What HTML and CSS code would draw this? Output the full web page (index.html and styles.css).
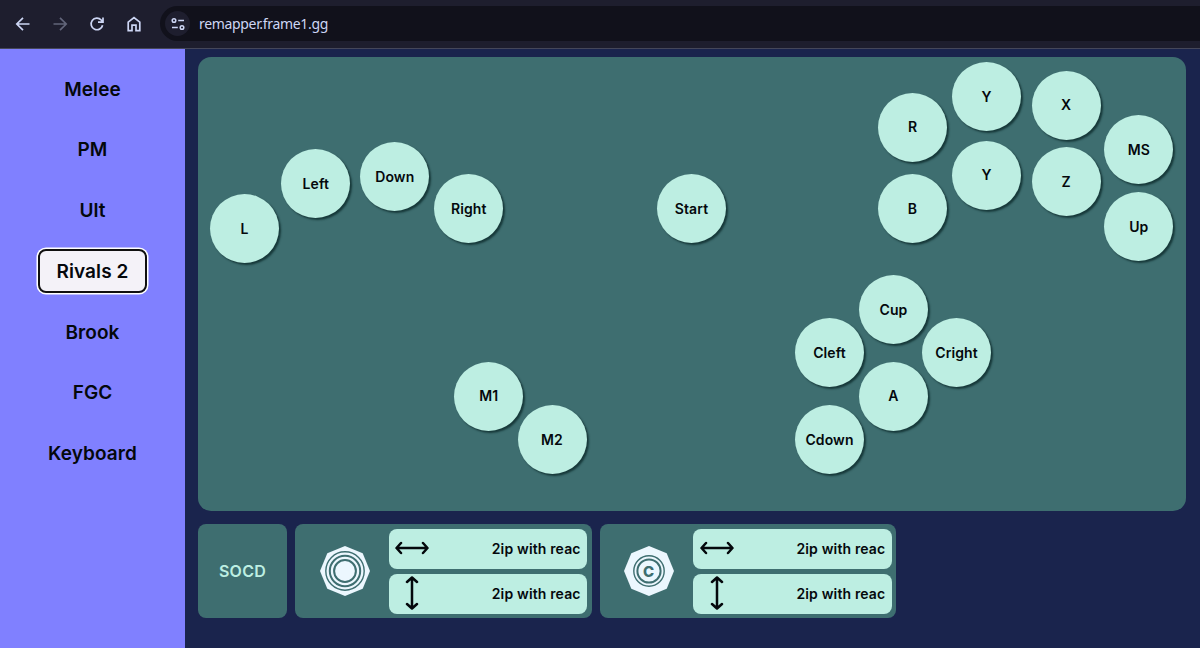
FILE: index.html
```
<!DOCTYPE html>
<html lang="en">
<head>
    <meta charset="UTF-8">
    <meta name="viewport" content="width=device-width, initial-scale=1.0">
    <title>Frame1 Remapper</title>
    <link rel="stylesheet" href="styles.css">
</head>
<body>
    <header class="browser-bar">
        <div class="browser-nav">
            <svg viewBox="0 0 16 16"><path d="M14.5 8H2.2M8 1.8L1.8 8L8 14.2"/></svg>
            <svg class="disabled" viewBox="0 0 16 16"><path d="M1.5 8h12.3M8 1.8L14.2 8L8 14.2"/></svg>
            <svg viewBox="0 0 16 16"><path d="M13.6 9.2A5.8 5.8 0 1 1 12.2 4L13.8 5.8M14 1.4V6.2H9"/></svg>
            <svg viewBox="0 0 16 16"><path d="M2.2 14.6V6.2L8 1.6L13.8 6.2V14.6H10V9.2H6V14.6Z"/></svg>
        </div>
        <div class="address">
            <span class="site-info">
                <svg viewBox="0 0 14 14"><circle cx="3" cy="3.5" r="1.8"/><circle cx="11" cy="10.5" r="1.8"/><path d="M7.2 3.5H13M1 10.5H6.8"/></svg>
            </span>
            <span class="url">remapper.frame1.gg</span>
        </div>
    </header>
    <div class="app">
        <nav class="sidebar">
            <button class="profile">Melee</button>
            <button class="profile">PM</button>
            <button class="profile">Ult</button>
            <button class="profile active">Rivals 2</button>
            <button class="profile">Brook</button>
            <button class="profile">FGC</button>
            <button class="profile">Keyboard</button>
        </nav>
        <main>
            <div class="board">
                <button class="key key-l">L</button>
                <button class="key key-left">Left</button>
                <button class="key key-down">Down</button>
                <button class="key key-right">Right</button>
                <button class="key key-start">Start</button>
                <button class="key key-r">R</button>
                <button class="key key-y1">Y</button>
                <button class="key key-x">X</button>
                <button class="key key-ms">MS</button>
                <button class="key key-b">B</button>
                <button class="key key-y2">Y</button>
                <button class="key key-z">Z</button>
                <button class="key key-up">Up</button>
                <button class="key key-cup">Cup</button>
                <button class="key key-cleft">Cleft</button>
                <button class="key key-cright">Cright</button>
                <button class="key key-a">A</button>
                <button class="key key-cdown">Cdown</button>
                <button class="key key-m1">M1</button>
                <button class="key key-m2">M2</button>
            </div>
            <div class="socd">
                <div class="panel socd-title">SOCD</div>
                <div class="panel stick">
                    <svg class="stick-icon" viewBox="-25 -25 50 50">
                        <polygon points="0,-25 17.7,-17.7 25,0 17.7,17.7 0,25 -17.7,17.7 -25,0 -17.7,-17.7"/>
                        <circle class="thin" r="19.2"/>
                        <circle r="15.2"/>
                        <circle r="10.9"/>
                    </svg>
                    <div class="modes">
                        <button class="mode">
                            <svg viewBox="-17 -17 34 34"><path d="M-15 0H15M-11-5L-15.5 0L-11 5M11-5L15.5 0L11 5"/></svg>
                            <span>2ip with reac</span>
                        </button>
                        <button class="mode">
                            <svg viewBox="-17 -17 34 34"><path d="M0-15V15M-5-11L0-15.5L5-11M-5 11L0 15.5L5 11"/></svg>
                            <span>2ip with reac</span>
                        </button>
                    </div>
                </div>
                <div class="panel stick">
                    <svg class="stick-icon" viewBox="-25 -25 50 50">
                        <polygon points="0,-25 17.7,-17.7 25,0 17.7,17.7 0,25 -17.7,17.7 -25,0 -17.7,-17.7"/>
                        <circle class="thin" r="15.2"/>
                        <circle r="11.6"/>
                        <text x="-0.5" y="5.5">C</text>
                    </svg>
                    <div class="modes">
                        <button class="mode">
                            <svg viewBox="-17 -17 34 34"><path d="M-15 0H15M-11-5L-15.5 0L-11 5M11-5L15.5 0L11 5"/></svg>
                            <span>2ip with reac</span>
                        </button>
                        <button class="mode">
                            <svg viewBox="-17 -17 34 34"><path d="M0-15V15M-5-11L0-15.5L5-11M-5 11L0 15.5L5 11"/></svg>
                            <span>2ip with reac</span>
                        </button>
                    </div>
                </div>
            </div>
        </main>
    </div>
</body>
</html>
```

FILE: styles.css
```
* {
    box-sizing: border-box;
}

body {
    font-family: Inter, 'Open Sans', sans-serif;
    margin: 0;
    height: 100vh;
    display: flex;
    flex-direction: column;
    overflow: hidden;
    background-color: #1a244d;
    color: #04080c;
}

button {
    font-family: inherit;
    color: inherit;
    border: none;
    padding: 0;
    cursor: pointer;
}

.browser-bar {
    height: 48.5px;
    flex-shrink: 0;
    display: flex;
    align-items: center;
    padding-left: 15px;
    background-color: #1e1e2e;
    border-bottom: 1px solid #45475a;
}

.browser-nav {
    display: flex;
    gap: 21px;
}

.browser-nav svg {
    width: 16px;
    height: 16px;
}

.browser-bar svg {
    fill: none;
    stroke: #cdd6f4;
    stroke-width: 1.7;
}

.browser-bar svg.disabled {
    stroke: #62657a;
}

.address {
    flex: 1;
    height: 35px;
    margin-left: 18px;
    padding-left: 5px;
    display: flex;
    align-items: center;
    gap: 9px;
    background-color: #11111b;
    border-radius: 18px 0 0 18px;
}

.site-info {
    width: 25px;
    height: 25px;
    border-radius: 50%;
    background-color: #1e1e2e;
    display: flex;
    align-items: center;
    justify-content: center;
}

.site-info svg {
    width: 14px;
    height: 14px;
    stroke-width: 1.5;
}

.url {
    font-family: 'Noto Sans', sans-serif;
    font-size: 14px;
    letter-spacing: -0.33px;
    color: #cdd6f4;
}

.app {
    flex: 1;
    display: flex;
}

.sidebar {
    width: 185px;
    background-color: #8080ff;
    display: flex;
    flex-direction: column;
    align-items: center;
    gap: 16.8px;
    padding-top: 18.5px;
}

.profile {
    width: 109px;
    height: 44px;
    font-size: 19px;
    font-weight: 600;
    letter-spacing: 0.1px;
    white-space: nowrap;
    background: none;
    border-radius: 8px;
}

.profile.active {
    background-color: #f4f2f8;
    border: 2px solid #101010;
    box-shadow: 0 0 0 1.5px #fff;
}

main {
    flex: 1;
    padding: 8.5px 14px 0 13px;
}

.board {
    position: relative;
    height: 454px;
    background-color: #3e6e70;
    border-radius: 13px;
}

/* Keys sit where they are on the physical controller */
.key {
    position: absolute;
    width: 69px;
    height: 69px;
    padding-bottom: 1px;
    border-radius: 50%;
    background-color: #bdeee2;
    box-shadow: 2px 2px 2px #17393a;
    font-size: 14px;
    font-weight: 600;
    letter-spacing: 0.1px;
}

.key-l { left: 12px; top: 137px; }
.key-left { left: 83.3px; top: 92px; }
.key-down { left: 162.3px; top: 85px; }
.key-right { left: 236.3px; top: 117px; }
.key-start { left: 459px; top: 117px; }
.key-r { left: 680px; top: 35.5px; }
.key-y1 { left: 754px; top: 5.3px; }
.key-x { left: 833.7px; top: 13.5px; }
.key-ms { left: 906.3px; top: 58px; }
.key-b { left: 680px; top: 117px; }
.key-y2 { left: 754px; top: 83.7px; }
.key-z { left: 833.7px; top: 90.3px; }
.key-up { left: 906.3px; top: 135px; }
.key-cup { left: 661px; top: 218px; }
.key-cleft { left: 597px; top: 261px; }
.key-cright { left: 724px; top: 261px; }
.key-a { left: 661px; top: 304.7px; }
.key-cdown { left: 597px; top: 348.3px; }
.key-m1 { left: 256.3px; top: 304.7px; }
.key-m2 { left: 319.5px; top: 348.3px; }

.socd {
    display: flex;
    gap: 8.2px;
    margin-top: 13px;
}

.panel {
    height: 94px;
    background-color: #3e6e70;
    border-radius: 8px;
}

.socd-title {
    width: 89px;
    display: flex;
    align-items: center;
    justify-content: center;
    font-size: 16px;
    font-weight: 600;
    letter-spacing: 0.3px;
    color: #bdeee2;
}

.stick {
    width: 296.5px;
    display: flex;
    align-items: center;
    justify-content: space-between;
    padding: 0 4.5px 0 24.5px;
}

.stick-icon {
    width: 50px;
    height: 50px;
    fill: #ecf7fe;
}

.stick-icon circle {
    fill: none;
    stroke: #3e6e70;
    stroke-width: 2;
}

.stick-icon circle.thin {
    stroke-width: 1.4;
}

.stick-icon text {
    font-size: 15px;
    font-weight: 800;
    text-anchor: middle;
    fill: #3e6e70;
}

.modes {
    display: flex;
    flex-direction: column;
    gap: 5px;
}

.mode {
    width: 198.5px;
    height: 40px;
    display: flex;
    align-items: center;
    justify-content: space-between;
    padding: 0 6.5px 1px;
    background-color: #bdeee2;
    border-radius: 8px;
    font-size: 14px;
    font-weight: 600;
    letter-spacing: 0.15px;
}

.mode svg {
    width: 34px;
    height: 34px;
    fill: none;
    stroke: #04080c;
    stroke-width: 2.5;
    stroke-linecap: round;
    stroke-linejoin: round;
}
```
